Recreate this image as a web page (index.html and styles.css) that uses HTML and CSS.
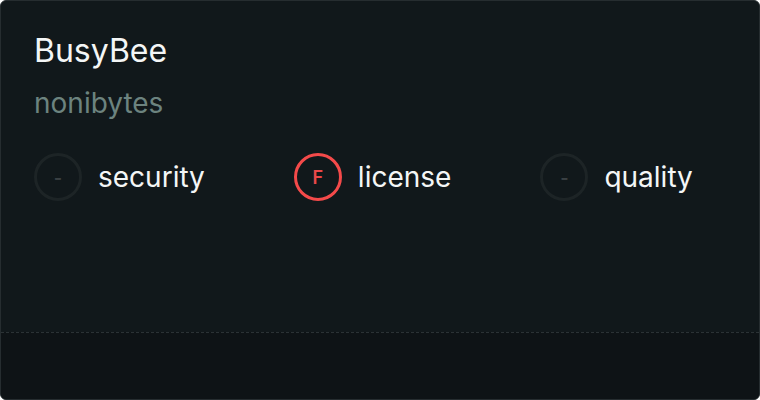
FILE: index.html
```html
<!DOCTYPE html>
<html>
<head>
<meta charset="utf-8">
<link rel="stylesheet" href="styles.css">
</head>
<body>
<div class="card">
  <div class="main">
    <div class="title">BusyBee</div>
    <div class="owner">nonibytes</div>
    <div class="scores">
      <div class="score">
        <div class="ring empty">-</div>
        <span class="label">security</span>
      </div>
      <div class="score">
        <div class="ring fail">F</div>
        <span class="label">license</span>
      </div>
      <div class="score">
        <div class="ring empty">-</div>
        <span class="label">quality</span>
      </div>
    </div>
  </div>
  <div class="footer"></div>
</div>
</body>
</html>
```

FILE: styles.css
```css
html, body {
  margin: 0;
  padding: 0;
  background: #ffffff;
}
.card {
  box-sizing: border-box;
  width: 760px;
  height: 400px;
  border: 1px solid #262d30;
  border-radius: 6px;
  background: #11181b;
  display: flex;
  flex-direction: column;
  overflow: hidden;
  font-family: Inter, "Noto Sans", sans-serif;
}
.main {
  flex: 1;
  padding: 32px 33px 0;
}
.title {
  color: #f4f6f6;
  font-size: 32px;
  line-height: 36px;
}
.owner {
  color: #6c837f;
  font-size: 28px;
  line-height: 32px;
  margin-top: 18px;
}
.scores {
  display: flex;
  gap: 89px;
  margin-top: 34px;
}
.score {
  display: flex;
  align-items: center;
  gap: 16px;
}
.ring {
  box-sizing: border-box;
  width: 48px;
  height: 48px;
  border-radius: 50%;
  border: 3px solid #1d2426;
  display: flex;
  align-items: center;
  justify-content: center;
  font-size: 18px;
  font-weight: 600;
}
.ring.empty {
  color: #3a4043;
}
.ring.fail {
  border-color: #f44a4a;
  color: #ea484a;
}
.label {
  color: #f4f6f6;
  font-size: 28px;
}
.footer {
  height: 66px;
  border-top: 1px dashed #2b3235;
  background: #0e1316;
}
```
